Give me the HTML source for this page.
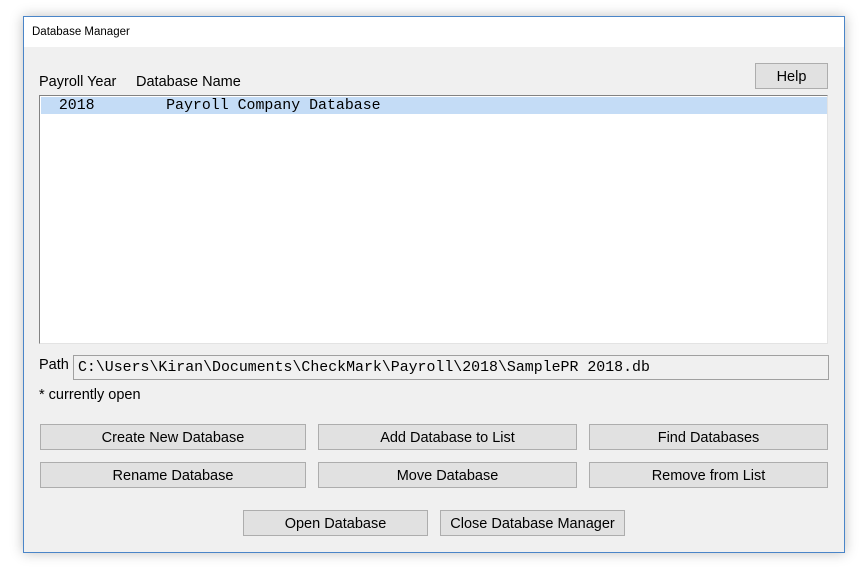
<!DOCTYPE html>
<html><head><style>
body{margin:0;width:868px;height:575px;background:#fff;position:relative;font-family:"Liberation Sans",sans-serif;overflow:hidden}
.win{position:absolute;left:23px;top:16px;width:820px;height:535px;border:1px solid #4a85c8;background:#f0f0f0;box-shadow:0 0 12px rgba(0,0,0,.25)}
.title{position:absolute;left:0;top:0;width:820px;height:30px;background:#fff;font-size:11.5px;line-height:30px;padding-left:8px;box-sizing:border-box;color:#000}
.a{position:absolute}
.lbl{font-size:14.5px;color:#000;white-space:nowrap}
.btn{position:absolute;background:#e1e1e1;border:1px solid #adadad;box-sizing:border-box;font-size:14.5px;text-align:center;line-height:26px;color:#000}
.mono{font-family:"Liberation Mono",monospace;font-size:14.9px}
</style></head><body>
<div class="win">
<div class="title">Database Manager</div>
</div>
<div class="a lbl" style="left:39px;top:74px">Payroll Year</div>
<div class="a lbl" style="left:136px;top:74px">Database Name</div>
<div class="btn" style="left:755px;top:63px;width:73px;height:26px">Help</div>
<div class="a" style="left:39px;top:95px;width:789px;height:249px;background:#fff;border-top:1px solid #828282;border-left:1px solid #828282;border-right:1px solid #e3e3e3;border-bottom:1px solid #e3e3e3;box-sizing:border-box">
<div class="a mono" style="left:1px;top:1px;width:786px;height:17px;background:#c4dcf6;line-height:18px;white-space:pre">  2018        Payroll Company Database</div>
</div>
<div class="a lbl" style="left:39px;top:357px">Path</div>
<div class="a mono" style="left:73px;top:355px;width:756px;height:25px;border:1px solid #a0a0a0;box-sizing:border-box;background:#f0f0f0;line-height:24px;padding-left:4px;white-space:pre">C:\Users\Kiran\Documents\CheckMark\Payroll\2018\SamplePR 2018.db</div>
<div class="a lbl" style="left:39px;top:387px">* currently open</div>
<div class="btn" style="left:40px;top:424px;width:266px;height:26px">Create New Database</div>
<div class="btn" style="left:318px;top:424px;width:259px;height:26px">Add Database to List</div>
<div class="btn" style="left:589px;top:424px;width:239px;height:26px">Find Databases</div>
<div class="btn" style="left:40px;top:462px;width:266px;height:26px">Rename Database</div>
<div class="btn" style="left:318px;top:462px;width:259px;height:26px">Move Database</div>
<div class="btn" style="left:589px;top:462px;width:239px;height:26px">Remove from List</div>
<div class="btn" style="left:243px;top:510px;width:185px;height:26px">Open Database</div>
<div class="btn" style="left:440px;top:510px;width:185px;height:26px">Close Database Manager</div>
</body></html>
